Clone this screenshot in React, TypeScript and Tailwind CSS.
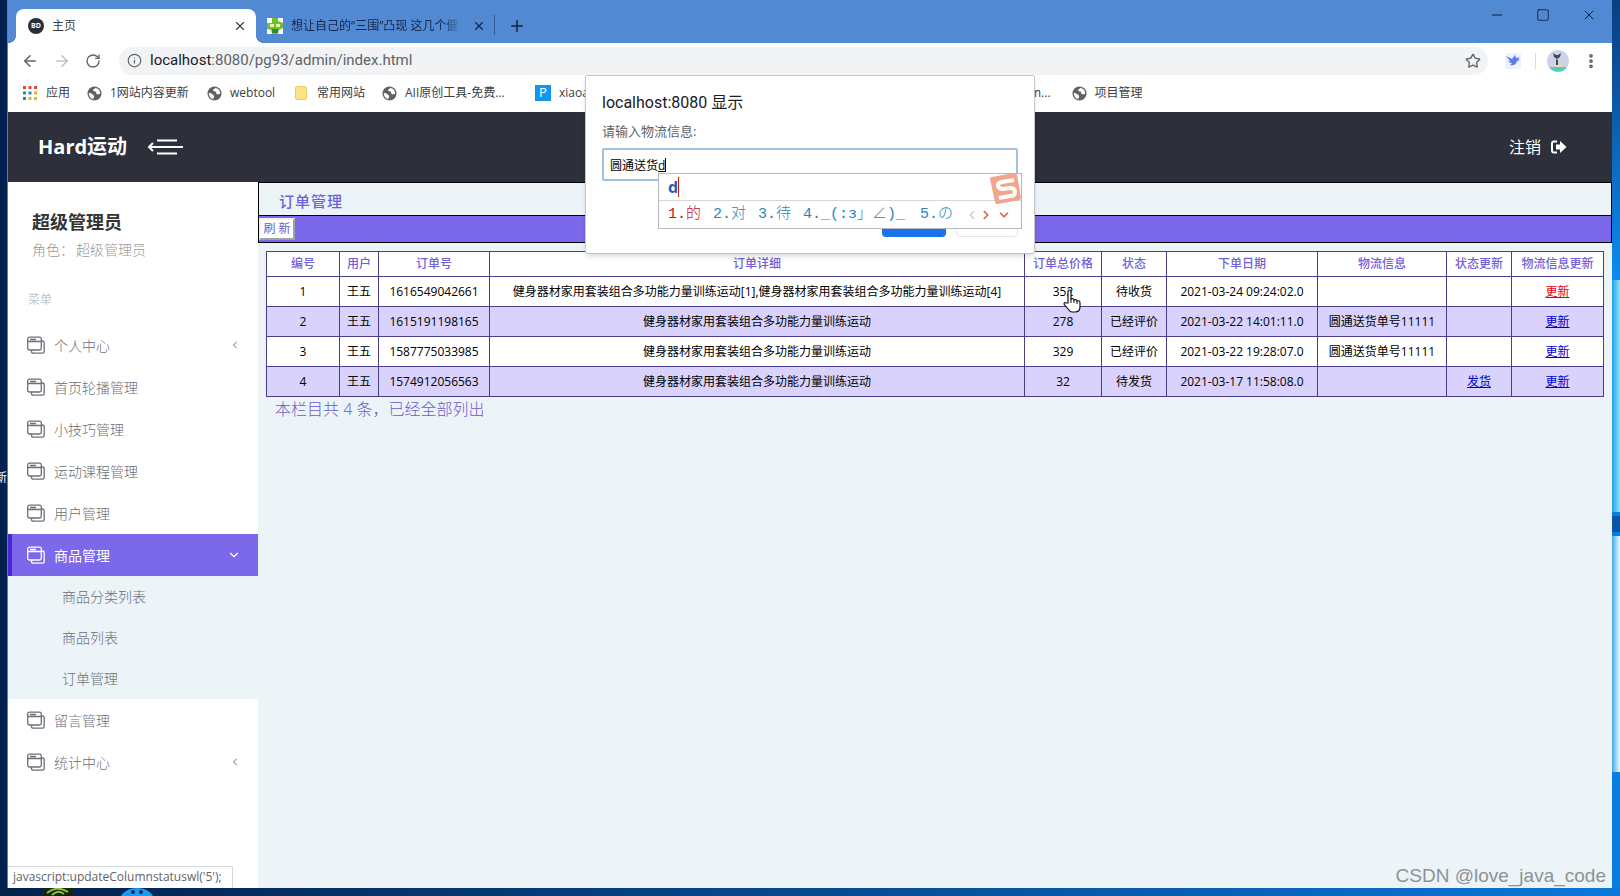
import React from 'react';
import { ArrowLeft, ArrowRight, ChevronDown, ChevronLeft, ChevronRight, Info, Minus, MoreVertical, Plus, RotateCw, Square, Star, X } from 'lucide-react';

interface Order {
  id: number;
  user: string;
  no: string;
  detail: string;
  total: string;
  status: string;
  date: string;
  shipping: string;
  canShip?: boolean;
  active?: boolean;
}

interface MenuEntry {
  label: string;
  arrow?: boolean;
  children?: string[];
}

const product = '健身器材家用套装组合多功能力量训练运动';

const orders: Order[] = [
  { id: 1, user: '王五', no: '1616549042661', detail: `${product}[1],${product}[4]`, total: '352', status: '待收货', date: '2021-03-24 09:24:02.0', shipping: '', active: true },
  { id: 2, user: '王五', no: '1615191198165', detail: product, total: '278', status: '已经评价', date: '2021-03-22 14:01:11.0', shipping: '圆通送货单号11111' },
  { id: 3, user: '王五', no: '1587775033985', detail: product, total: '329', status: '已经评价', date: '2021-03-22 19:28:07.0', shipping: '圆通送货单号11111' },
  { id: 4, user: '王五', no: '1574912056563', detail: product, total: '32', status: '待发货', date: '2021-03-17 11:58:08.0', shipping: '', canShip: true },
];

const columns = [
  { title: '编号', width: 'w-[73px]' },
  { title: '用户', width: 'w-[39px]' },
  { title: '订单号', width: 'w-[111px]' },
  { title: '订单详细', width: '' },
  { title: '订单总价格', width: 'w-[77px]' },
  { title: '状态', width: 'w-[65px]' },
  { title: '下单日期', width: 'w-[151px]' },
  { title: '物流信息', width: 'w-[129px]' },
  { title: '状态更新', width: 'w-[65px]' },
  { title: '物流信息更新', width: 'w-[92px]' },
];

const menu: MenuEntry[] = [
  { label: '个人中心', arrow: true },
  { label: '首页轮播管理' },
  { label: '小技巧管理' },
  { label: '运动课程管理' },
  { label: '用户管理' },
  { label: '商品管理', children: ['商品分类列表', '商品列表', '订单管理'] },
  { label: '留言管理' },
  { label: '统计中心', arrow: true },
];

const GlobeIcon = () => (
  <svg viewBox="0 0 16 16" className="h-[15px] w-[15px] shrink-0">
    <circle cx="8" cy="8" r="7.5" fill="#5f6368" />
    <path d="M2 7.500c2 0 3 .6 4 1.600s1.900 1 1.600 2.300-.9 1.300-1 2.600C4 13.600 1.800 10.800 2 7.500zM8.600 2c-.4 1.300-2 1-2 2.400s2.200.7 2.900 1.800-.3 2.100 1.200 2.500 2.300-.6 3.200-.2C14.500 4.800 11.800 2.200 8.600 2z" fill="#fff" />
  </svg>
);

const AppsIcon = () => (
  <svg viewBox="0 0 14 14" className="h-[14px] w-[14px] shrink-0">
    <path d="M0 0h3v3H0zM5.500 0h3v3h-3zM11 0h3v3h-3z" fill="#dd4b39" />
    <path d="M0 5.500h3v3H0zM0 11h3v3H0z" fill="#1e9e57" />
    <path d="M5.500 5.500h3v3h-3z" fill="#3b7de0" />
    <path d="M11 5.500h3v3h-3zM5.500 11h3v3h-3zM11 11h3v3h-3z" fill="#f0b429" />
  </svg>
);

const WindowsIcon = () => (
  <svg viewBox="0 0 18 18" fill="none" stroke="currentColor" strokeWidth="1.3" className="h-[18px] w-[18px] shrink-0">
    <rect x="0.700" y="1.200" width="13.600" height="12.800" rx="1.800" />
    <path d="M1 5.500h13M3 3.500h6M14.500 5h1q1.700 0 1.700 1.700V15.500q0 1.700-1.700 1.700H6.200q-1.700 0-1.700-1.700V14.200" />
  </svg>
);

const TabStrip = () => (
  <div className="flex h-[43px] items-end bg-[#5289d3] pl-2">
    <div className="relative flex h-[34px] w-60 items-center rounded-t-lg bg-white pr-[9px] pl-3 text-[12px] text-[#3c4043] before:absolute before:bottom-0 before:-left-2 before:h-2 before:w-2 before:bg-[radial-gradient(circle_at_0_0,transparent_8px,white_8px)] after:absolute after:-right-2 after:bottom-0 after:h-2 after:w-2 after:bg-[radial-gradient(circle_at_100%_0,transparent_8px,white_8px)]">
      <span className="flex h-4 w-4 items-center justify-center rounded-full bg-[#2b2e38] text-[7px] font-bold text-white">BD</span>
      <span className="ml-2 flex-1">主页</span>
      <button aria-label="关闭主页"><X className="h-[14px] w-[14px]" /></button>
    </div>
    <div className="flex h-[34px] w-[238px] items-center pr-2 pl-[11px] text-[12px] text-[#14274a]">
      <svg viewBox="0 0 16 16" className="h-4 w-4 shrink-0">
        <rect width="16" height="16" fill="#fff" />
        <path d="M5 0h6v3l5 2v5l-4 2-1 4H5l-1-4-4-1V5h5z" fill="#6fbf35" />
        <path d="M3 6h4v3H3zM9 6h4v3H9z" fill="#e6f4a8" />
        <path d="M5 11h6v4H5z" fill="#2e8c2e" />
      </svg>
      <span className="ml-2 w-[170px] overflow-hidden whitespace-nowrap [mask-image:linear-gradient(to_right,black_90%,transparent)]">想让自己的“三围”凸现 这几个健身</span>
      <button aria-label="关闭标签页" className="ml-[11px]"><X className="h-[14px] w-[14px]" /></button>
    </div>
    <div className="mb-2 h-5 border-l border-[#2d5a9b]" />
    <button aria-label="新标签页" className="mb-2 ml-[13px] text-[#10213d]"><Plus className="h-[18px] w-[18px]" /></button>
    <div className="ml-auto flex items-center gap-[31px] self-start pt-[7px] pr-[15px] text-[#0d1f3d]">
      <button aria-label="最小化"><Minus className="h-4 w-4" strokeWidth={1.500} /></button>
      <button aria-label="最大化"><Square className="h-[14px] w-[14px]" strokeWidth={1.500} /></button>
      <button aria-label="关闭"><X className="h-4 w-4" strokeWidth={1.500} /></button>
    </div>
  </div>
);

const Toolbar = () => (
  <div className="flex h-[35px] items-center bg-white pr-3 pl-[13px] text-[#5f6368]">
    <button aria-label="后退"><ArrowLeft className="h-[18px] w-[18px]" /></button>
    <button aria-label="前进" className="ml-[14px] text-[#bdc1c6]"><ArrowRight className="h-[18px] w-[18px]" /></button>
    <button aria-label="刷新页面" className="ml-[14px]"><RotateCw className="h-4 w-4" /></button>
    <div className="ml-[18px] flex h-7 flex-1 items-center rounded-full bg-[#f1f3f4] pr-[7px] pl-2">
      <Info className="h-[15px] w-[15px]" />
      <span className="ml-2 font-[Roboto,sans-serif] text-[15px]"><span className="text-[#202124]">localhost</span>:8080/pg93/admin/index.html</span>
      <button aria-label="收藏" className="ml-auto"><Star className="h-4 w-4" /></button>
    </div>
    <svg viewBox="0 0 16 16" className="ml-[17px] h-4 w-4">
      <rect width="16" height="16" fill="#f0f2fe" />
      <path d="M1 3l6 3 3-4 1 3 4-1-2 2 2 1-3 1c-1 4-4 5-7 4l2-2-4-1 2-1z" fill="#5b7cf5" />
    </svg>
    <div className="ml-[14px] h-4 border-l border-[#dadce0]" />
    <svg viewBox="0 0 22 22" className="ml-[11px] h-[22px] w-[22px]">
      <circle cx="11" cy="11" r="11" fill="#ccd2ea" />
      <path d="M2 17h18a11 11 0 0 1-18 0z" fill="#4fd0bb" />
      <path d="M8 9l3 1 2 4 5 3H6l2-3z" fill="#e2d8bd" />
      <path d="M6 3l3 2 2 0 3-2-1 4-3 2-3-2zM9 9l2 1v5H9z" fill="#454a4d" />
    </svg>
    <button aria-label="菜单" className="ml-[13px]"><MoreVertical className="h-[18px] w-[18px]" strokeWidth={3} /></button>
  </div>
);

const Bookmarks = () => (
  <div className="flex h-[34px] items-center bg-white pb-1 pl-[15px] text-[12px] whitespace-nowrap text-[#3c4043]">
    <a href="#apps" className="flex w-16 items-center gap-[9px]"><AppsIcon />应用</a>
    <a href="#site" className="flex w-[120px] items-center gap-2"><GlobeIcon />1网站内容更新</a>
    <a href="#webtool" className="flex w-[88px] items-center gap-2"><GlobeIcon />webtool</a>
    <a href="#sites" className="flex w-[87px] items-center gap-[10px]"><span className="h-[14px] w-3 rounded-xs border border-[#e6cd62] bg-[#fbe386]" />常用网站</a>
    <a href="#ai" className="flex w-[153px] items-center gap-2"><GlobeIcon />AII原创工具-免费...</a>
    <a href="#xiao" className="flex items-center gap-2"><span className="flex h-4 w-4 items-center justify-center bg-[#1296f0] text-[13px] text-white">P</span>xiaoa</a>
    <span className="ml-auto flex w-[582px] items-center gap-[21px]">
      <a href="#more">m...</a>
      <a href="#project" className="flex items-center gap-2"><GlobeIcon />项目管理</a>
    </span>
  </div>
);

const Header = () => (
  <header className="flex h-[70px] items-center bg-[#2d303b] pr-[45px] pl-[30px] text-white">
    <h1 className="text-[20px] font-bold">Hard运动</h1>
    <button aria-label="收起菜单" className="ml-[21px]">
      <svg viewBox="0 0 36 16" fill="none" stroke="currentColor" strokeWidth="2" className="h-4 w-9">
        <path d="M9 1.500h20M1 8h34M9 14.500h20M5 4L1 8l4 4" />
      </svg>
    </button>
    <a href="#logout" className="ml-auto flex items-center gap-[10px] text-[16px]">
      注销
      <svg viewBox="0 0 16 14" className="h-[14px] w-4">
        <path d="M6 1.500H3q-2 0-2 2v7q0 2 2 2h3" fill="none" stroke="currentColor" strokeWidth="2" />
        <path d="M5 4.500h4V1l6.500 6L9 13V9.500H5z" fill="currentColor" />
      </svg>
    </a>
  </header>
);

const Sidebar = () => (
  <aside className="w-[250px] shrink-0 bg-white">
    <div className="h-[142px] px-6 pt-[26px]">
      <div className="text-[18px] leading-7 font-bold text-[#333]">超级管理员</div>
      <div className="flex gap-[2px] text-[14px] leading-7 font-light text-[#999]"><span>角色：</span><span>超级管理员</span></div>
      <div className="-ml-1 pt-6 text-[12px] leading-6 font-light text-[#aaa]">菜单</div>
    </div>
    <nav className="text-[14px] font-light text-[#6b6f78]">
      {menu.map((item) => (
        <div key={item.label}>
          <a
            href="#menu"
            className={
              item.children
                ? 'flex h-[42px] items-center gap-[9px] border-l-4 border-[#4a26d6] bg-[#7b68ea] pr-[17px] pl-[15px] font-normal text-white'
                : 'flex h-[42px] items-center gap-[9px] pr-[17px] pl-[19px]'
            }
          >
            <WindowsIcon />
            <span className="flex-1">{item.label}</span>
            {item.arrow && <ChevronLeft className="h-3 w-3" />}
            {item.children && <ChevronDown className="h-[14px] w-[14px]" />}
          </a>
          {item.children && (
            <div className="bg-[#ecf4f8]">
              {item.children.map((child) => (
                <a key={child} href="#submenu" className="flex h-[41px] items-center pl-[54px]">{child}</a>
              ))}
            </div>
          )}
        </div>
      ))}
    </nav>
  </aside>
);

const OrderTable = () => (
  <table className="w-full table-fixed border-collapse border border-[#483d8b] bg-white text-center text-[12px] whitespace-nowrap text-black">
    <thead>
      <tr className="h-[25px] text-[#6f60da]">
        {columns.map((col) => (
          <th key={col.title} className={`border border-[#483d8b] p-0 font-medium ${col.width}`}>{col.title}</th>
        ))}
      </tr>
    </thead>
    <tbody>
      {orders.map((order) => (
        <tr key={order.id} className="h-[30px] even:bg-[#d8d2fc] [&>td]:border [&>td]:border-[#483d8b] [&>td]:p-0">
          <td>{order.id}</td>
          <td>{order.user}</td>
          <td>{order.no}</td>
          <td>{order.detail}</td>
          <td>{order.total}</td>
          <td>{order.status}</td>
          <td>{order.date}</td>
          <td>{order.shipping}</td>
          <td>{order.canShip && <a href="#ship" className="text-[#0000cc] underline">发货</a>}</td>
          <td><a href="#update" className={order.active ? 'text-[#e60012] underline' : 'text-[#0000cc] underline'}>更新</a></td>
        </tr>
      ))}
    </tbody>
  </table>
);

const ImePopup = () => (
  <div className="absolute top-[97px] left-[72px] h-[56px] w-[364px] border border-[#b4b8bf] bg-white">
    <div className="flex h-[27px] items-center border-b border-[#d4d7dc] pl-[9px]">
      <span className="border-r border-[#d01818] text-[16px] leading-5 font-bold text-[#1f5fc0]">d</span>
    </div>
    <div className="flex h-[27px] items-center pl-[9px] font-['Liberation_Mono','Noto_Sans_CJK_SC',monospace] text-[15px] leading-[27px] font-light whitespace-pre text-[#2a86b8]">
      <span className="w-[45px] text-[#c8141e]">1.的</span>
      <span className="w-[45px]">2.对</span>
      <span className="w-[45px]">3.待</span>
      <span className="w-[117px]">4._(:з」∠)_</span>
      <span className="w-[45px]">5.の</span>
      <ChevronLeft className="h-[14px] w-[14px] text-[#c9c9c9]" />
      <ChevronRight className="h-[14px] w-[14px] text-[#e0604a]" strokeWidth={3} />
      <ChevronDown className="ml-1 h-[14px] w-[14px] text-[#e0604a]" strokeWidth={3} />
    </div>
    <svg viewBox="0 0 32 32" className="absolute -top-px right-0 h-8 w-8">
      <path d="M1 6Q1 4 3 4L25 0q3 0 3 2l4 23q0 2-2 2L9 31q-3 0-3-2z" fill="#f2a58c" />
      <path d="M25 7l-12 2q-5 1-4 4t5 3l7-1q5 0 5 4t-5 4l-11 2" fill="none" stroke="#fff" strokeWidth="4" />
    </svg>
  </div>
);

const PromptDialog = () => (
  <div role="dialog" aria-label="localhost:8080 显示" className="absolute inset-x-0 top-[75px] mx-auto h-[179px] w-[450px] rounded-xs border border-[#c4c7cc] bg-white px-4 pt-[15px] shadow-md">
    <h2 className="font-[Roboto,'Noto_Sans_CJK_SC',sans-serif] text-[16px] leading-6 text-[#202124]">localhost:8080 显示</h2>
    <label htmlFor="shipping" className="mt-1 block text-[13px] leading-6 text-[#5f6368]">请输入物流信息:</label>
    <input id="shipping" type="text" defaultValue="圆通送货d" className="mt-[5px] block h-[33px] w-full rounded-xs border-2 border-[#a3c0e4] px-[6px] text-[12px] text-black outline-none" />
    {/* composition underline and caret */}
    <span className="absolute top-[82px] left-[72px] h-[14px] w-2 border-r border-b border-black" />
    <div className="mt-6 flex justify-end gap-[10px]">
      <button aria-label="确定" className="h-8 w-16 rounded-sm bg-[#1a73e8]" />
      <button aria-label="取消" className="h-8 w-[62px] rounded-sm border border-[#e4e6e9]" />
    </div>
    <ImePopup />
  </div>
);

export default function App() {
  return (
    <div className="relative flex min-h-screen flex-col overflow-hidden bg-linear-to-r from-[#03204a] to-[#0a78dc] font-['Open_Sans','Noto_Sans_CJK_SC',sans-serif]">
      <div className="flex flex-1">
        <div className="relative w-2 shrink-0 overflow-hidden border-r border-[#4f7fc0] bg-[#02214f]">
          <span className="absolute top-[470px] right-0 text-[12px] leading-4 text-white">新</span>
        </div>
        <div className="flex min-w-0 flex-1 flex-col">
          <TabStrip />
          <Toolbar />
          <Bookmarks />
          <Header />
          <div className="flex flex-1">
            <Sidebar />
            <main className="min-w-0 flex-1 bg-[#ecf4f8]">
              <div className="border border-black">
                <h2 className="h-[33px] border-b border-black pl-5 text-[15px] leading-9 font-medium tracking-[1px] text-[#6f60da]">订单管理</h2>
                <div className="flex h-[26px] items-center bg-[#7b68ea]">
                  <button className="h-[22px] w-9 border-2 border-[#f0f0f0] border-r-[#a0a0a0] border-b-[#a0a0a0] bg-white text-[12px] leading-none whitespace-pre text-[#6a5acd]">刷 新</button>
                </div>
              </div>
              <div className="px-2 pt-2">
                <OrderTable />
                <p className="pl-[9px] text-[16px] leading-6 font-light text-[#6a5acd]">本栏目共 4 条，已经全部列出</p>
              </div>
            </main>
          </div>
        </div>
        <div className="flex w-2 shrink-0 flex-col bg-[#0a7ee0]">
          <div className="h-[280px] bg-linear-to-b from-[#0b3d80] to-[#0a8cf0]" />
          <div className="h-[232px] bg-linear-to-r from-[#12a0e8] to-[#8be4fb]" />
          <div className="my-1 h-4 bg-[#0a55a8]" />
          <div className="h-[236px] bg-linear-to-r from-[#3aa8e8] to-[#e8fbff]" />
        </div>
      </div>
      <div className="flex h-2 items-start gap-12 overflow-hidden pl-[43px]">
        <svg viewBox="0 0 30 8" className="h-2 w-[30px]">
          <rect width="30" height="8" fill="#17240d" />
          <path d="M4 5q10-8 21-1M9 7q6-6 12-1" fill="none" stroke="#8bc53f" strokeWidth="2" />
        </svg>
        <svg viewBox="0 0 32 8" className="h-2 w-8">
          <path d="M0 8Q5 0 16 0t16 8z" fill="#1b9bf0" />
          <circle cx="12" cy="4" r="2" fill="#052a66" />
          <circle cx="20" cy="4" r="2" fill="#052a66" />
        </svg>
      </div>
      <div className="absolute bottom-2 left-2 h-[22px] w-[225px] border-t border-r border-[#d5d7da] bg-white px-[5px] text-[12px] leading-5 text-[#5f6368]">javascript:updateColumnstatuswl('5');</div>
      <div className="absolute right-[14px] bottom-2 font-['Liberation_Sans',sans-serif] text-[19px] leading-6 text-[#8d9296]">CSDN @love_java_code</div>
      <PromptDialog />
      <svg viewBox="0 0 18 24" className="absolute top-[289px] left-[1063px] h-6 w-[18px]">
        <path d="M5 14V3q0-2 1.500-2T8 3v7q3-1 3 1 3-1 3 1 3-1 3 2v4q0 5-5 5H9q-2 0-4-3l-4-5q0-2 2-1z" fill="#fff" stroke="#111" strokeWidth="1.200" />
        <path d="M8 10v4M11 11v3M14 12v3" stroke="#111" strokeWidth="1" />
      </svg>
    </div>
  );
}
